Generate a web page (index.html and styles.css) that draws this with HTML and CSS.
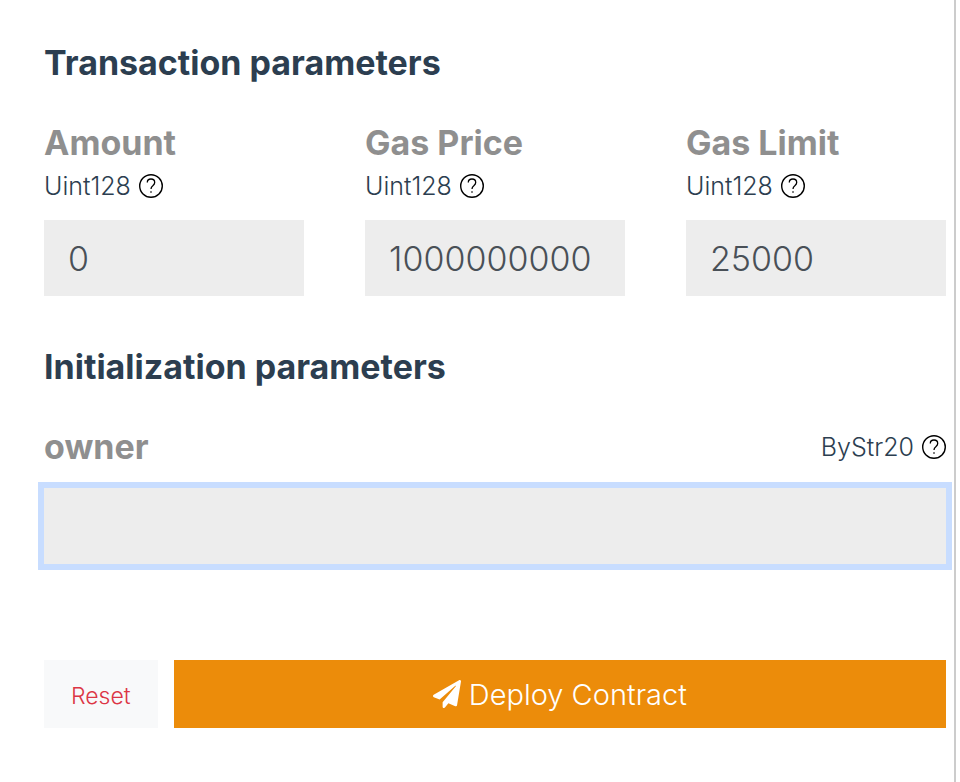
FILE: index.html
```
<!DOCTYPE html>
<html lang="en">
<head>
    <meta charset="UTF-8">
    <meta name="viewport" content="width=device-width, initial-scale=1.0">
    <title>Deploy Contract</title>
    <link rel="stylesheet" href="styles.css">
</head>
<body>
    <!-- Help icon, shared by all fields -->
    <svg class="sprite" aria-hidden="true">
        <symbol id="icon-help" viewBox="0 0 24 24">
            <circle cx="12" cy="12" r="11.3" fill="none" stroke="#000" stroke-width="1.4"/>
            <path d="M8.3 8.5C8.3 6.3 9.9 5 12 5s3.7 1.4 3.7 3.4c0 1.6-.9 2.4-1.9 3.3-1.1.9-1.8 1.5-1.8 3.3" fill="none" stroke="#000" stroke-width="1.3"/>
            <rect x="11.3" y="17.3" width="1.4" height="1.4" fill="#000"/>
        </symbol>
    </svg>

    <form class="deploy-panel">
        <h2 class="section-title">Transaction parameters</h2>
        <div class="fields">
            <div class="field">
                <label class="field-name" for="amount">Amount</label>
                <div class="field-type">
                    <span>Uint128</span>
                    <button class="help" type="button" aria-label="Help"><svg><use href="#icon-help"/></svg></button>
                </div>
                <input class="field-input" id="amount" type="text" value="0">
            </div>
            <div class="field">
                <label class="field-name" for="gas-price">Gas Price</label>
                <div class="field-type">
                    <span>Uint128</span>
                    <button class="help" type="button" aria-label="Help"><svg><use href="#icon-help"/></svg></button>
                </div>
                <input class="field-input" id="gas-price" type="text" value="1000000000">
            </div>
            <div class="field">
                <label class="field-name" for="gas-limit">Gas Limit</label>
                <div class="field-type">
                    <span>Uint128</span>
                    <button class="help" type="button" aria-label="Help"><svg><use href="#icon-help"/></svg></button>
                </div>
                <input class="field-input" id="gas-limit" type="text" value="25000">
            </div>
        </div>

        <h2 class="section-title">Initialization parameters</h2>
        <div class="field">
            <div class="field-header">
                <label class="field-name" for="owner">owner</label>
                <div class="field-type">
                    <span>ByStr20</span>
                    <button class="help" type="button" aria-label="Help"><svg><use href="#icon-help"/></svg></button>
                </div>
            </div>
            <input class="field-input active" id="owner" type="text">
        </div>

        <div class="actions">
            <button class="btn btn-reset" type="reset">Reset</button>
            <button class="btn btn-deploy" type="submit">
                <svg class="plane" viewBox="0 0 512 512" aria-hidden="true"><path fill="currentColor" d="M476 3.2L12.5 270.6c-18.1 10.4-15.8 35.6 2.2 43.2L121 358.4l287.3-253.2c5.5-4.9 13.3 2.6 8.6 8.3L176 407v80.500c0 23.6 28.5 32.9 42.5 15.8L282 426l124.600 52.2c14.2 6 30.4-2.900 33-18.2l72-432C515 7.8 493.3-6.8 476 3.2z"/></svg>
                Deploy Contract
            </button>
        </div>
    </form>
</body>
</html>
```
FILE: styles.css
```
* { box-sizing: border-box; }

body {
    margin: 0;
    background-color: #fff;
    color: #2c3e50;
    font-family: Inter, sans-serif;
    font-size: 25px;
}

button, input { font-family: inherit; }

.sprite { display: none; }

.deploy-panel {
    min-height: 100vh;
    margin-right: 4px;
    padding: 43px 8px 54px 44px;
    border-right: 2px solid #ccc;
}

.section-title {
    margin: 0 0 35px;
    font-size: 34px;
    font-weight: 700;
    line-height: 40px;
}

.fields {
    display: grid;
    grid-template-columns: repeat(3, 1fr);
    gap: 61px;
    margin-bottom: 51px;
}

.field { min-width: 0; }

.field-header {
    display: flex;
    justify-content: space-between;
    align-items: center;
}

.field-name {
    display: block;
    color: #8f8f8f;
    font-size: 34px;
    font-weight: 700;
    line-height: 50px;
}

.field-type {
    display: flex;
    align-items: center;
    gap: 8px;
    line-height: 36px;
    font-weight: 300;
}

.help {
    width: 24px;
    height: 24px;
    padding: 0;
    border: none;
    background: none;
    cursor: pointer;
}

.help svg {
    display: block;
    width: 24px;
    height: 24px;
}

.field-input {
    display: block;
    width: 100%;
    height: 76px;
    margin-top: 16px;
    padding: 0 24px;
    border: none;
    border-radius: 0;
    outline: none;
    background-color: #ededed;
    color: #495057;
    font-size: 34px;
    font-weight: 300;
}

.field-input:focus,
.field-input.active { box-shadow: 0 0 0 6px #c8ddff; }

.actions {
    display: flex;
    gap: 16px;
    margin-top: 96px;
}

.btn {
    height: 68px;
    border: none;
    font-weight: 300;
    cursor: pointer;
}

.btn-reset {
    padding: 4px 27px 0;
    background-color: #f8f9fa;
    color: #dc3545;
    font-size: 23px;
}

.btn-deploy {
    display: flex;
    flex: 1;
    justify-content: center;
    align-items: center;
    gap: 8px;
    background-color: #ec8c0a;
    color: #fff;
    font-size: 29px;
}

.plane {
    width: 28px;
    height: 28px;
}
```
